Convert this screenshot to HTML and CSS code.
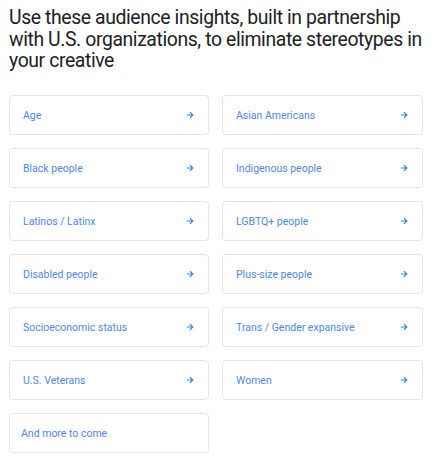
FILE: index.html
```html
<!DOCTYPE html>
<html lang="en">
<head>
<meta charset="utf-8">
<title>Audience insights</title>
<link rel="stylesheet" href="styles.css">
</head>
<body>
<main class="page">
  <h1 class="title">Use these audience insights, built in partnership with U.S. organizations, to eliminate stereotypes in your creative</h1>
  <div class="grid">
    <a class="card" href="#"><span>Age</span><svg class="arrow" viewBox="0 0 10 10"><path d="M1 5h7.5M5 1.5L8.5 5 5 8.5"/></svg></a>
    <a class="card" href="#"><span>Asian Americans</span><svg class="arrow" viewBox="0 0 10 10"><path d="M1 5h7.5M5 1.5L8.5 5 5 8.5"/></svg></a>
    <a class="card" href="#"><span>Black people</span><svg class="arrow" viewBox="0 0 10 10"><path d="M1 5h7.5M5 1.5L8.5 5 5 8.5"/></svg></a>
    <a class="card" href="#"><span>Indigenous people</span><svg class="arrow" viewBox="0 0 10 10"><path d="M1 5h7.5M5 1.5L8.5 5 5 8.5"/></svg></a>
    <a class="card" href="#"><span>Latinos / Latinx</span><svg class="arrow" viewBox="0 0 10 10"><path d="M1 5h7.5M5 1.5L8.5 5 5 8.5"/></svg></a>
    <a class="card" href="#"><span>LGBTQ+ people</span><svg class="arrow" viewBox="0 0 10 10"><path d="M1 5h7.5M5 1.5L8.5 5 5 8.5"/></svg></a>
    <a class="card" href="#"><span>Disabled people</span><svg class="arrow" viewBox="0 0 10 10"><path d="M1 5h7.5M5 1.5L8.5 5 5 8.5"/></svg></a>
    <a class="card" href="#"><span>Plus-size people</span><svg class="arrow" viewBox="0 0 10 10"><path d="M1 5h7.5M5 1.5L8.5 5 5 8.5"/></svg></a>
    <a class="card" href="#"><span>Socioeconomic status</span><svg class="arrow" viewBox="0 0 10 10"><path d="M1 5h7.5M5 1.5L8.5 5 5 8.5"/></svg></a>
    <a class="card" href="#"><span>Trans / Gender expansive</span><svg class="arrow" viewBox="0 0 10 10"><path d="M1 5h7.5M5 1.5L8.5 5 5 8.5"/></svg></a>
    <a class="card" href="#"><span>U.S. Veterans</span><svg class="arrow" viewBox="0 0 10 10"><path d="M1 5h7.5M5 1.5L8.5 5 5 8.5"/></svg></a>
    <a class="card" href="#"><span>Women</span><svg class="arrow" viewBox="0 0 10 10"><path d="M1 5h7.5M5 1.5L8.5 5 5 8.5"/></svg></a>
    <div class="card card-static"><span>And more to come</span></div>
  </div>
</main>
</body>
</html>
```
FILE: styles.css
```css
html, body {
  margin: 0;
  padding: 0;
  background: #ffffff;
}

.page {
  padding: 7px 9px 0 9px;
  font-family: Roboto, "Noto Sans", Arial, sans-serif;
}

.title {
  margin: 0 0 23px 0;
  font-size: 19.4px;
  font-weight: 400;
  line-height: 21.5px;
  color: #202124;
  letter-spacing: -0.4px;
}

.grid {
  display: grid;
  grid-template-columns: 200px 201px;
  grid-auto-rows: 40px;
  column-gap: 13px;
  row-gap: 13px;
}

.card {
  box-sizing: border-box;
  display: flex;
  align-items: center;
  justify-content: space-between;
  padding: 1px 14px 0 13px;
  border: 1px solid #e4e4e4;
  border-radius: 4px;
  color: #4f86ef;
  font-size: 10.5px;
  text-decoration: none;
}

.card-static {
  padding-left: 11px;
}

.arrow {
  width: 8px;
  height: 8px;
  fill: none;
  stroke: #3d7bf0;
  stroke-width: 1.5;
}
```
